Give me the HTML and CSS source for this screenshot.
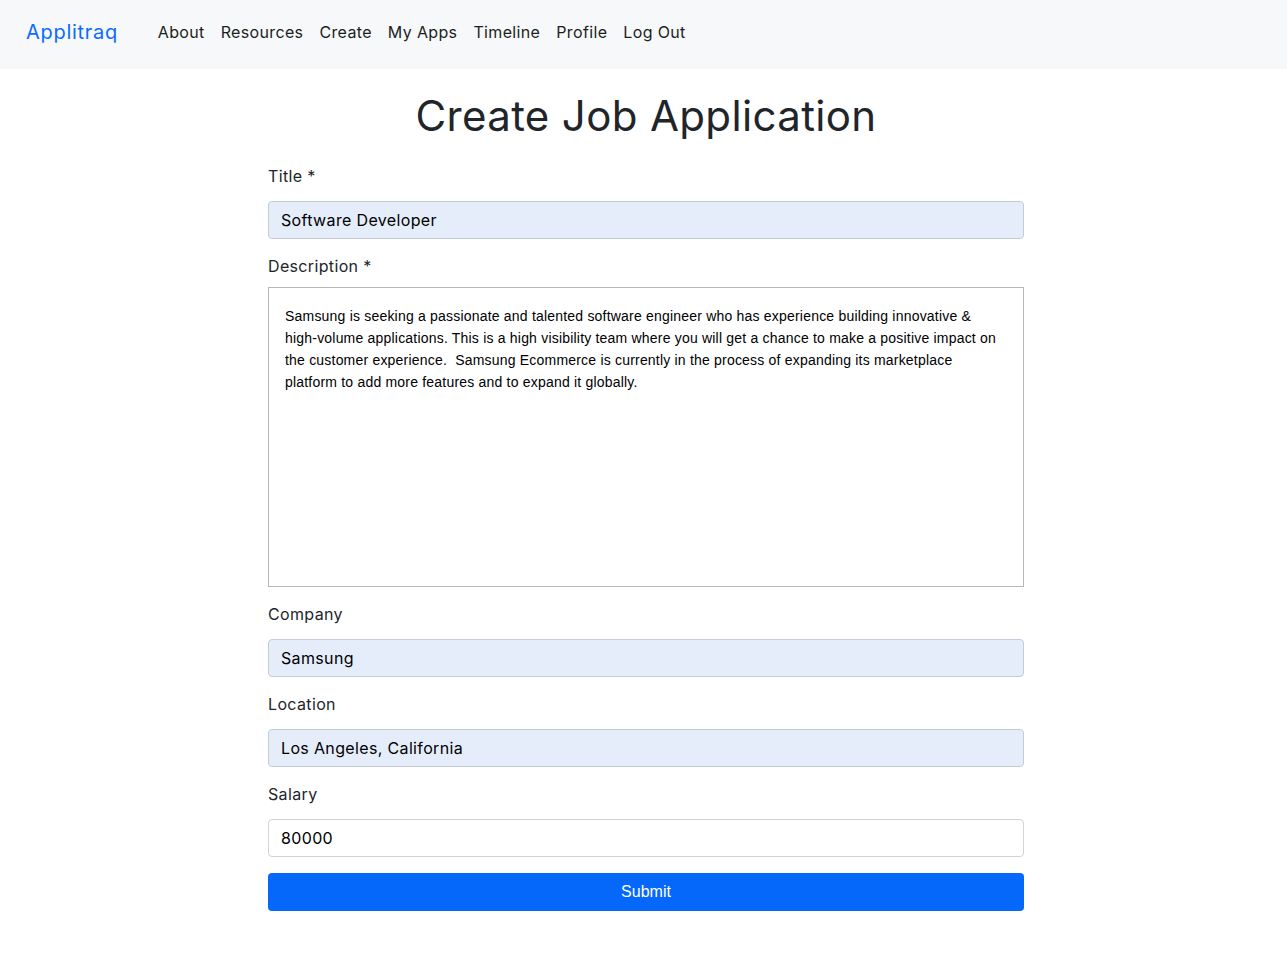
FILE: index.html
```html
<!DOCTYPE html>
<html lang="en">
<head>
<meta charset="utf-8">
<title>Applitraq - Create Job Application</title>
<link rel="stylesheet" href="styles.css">
</head>
<body>
<nav class="navbar">
  <a class="brand" href="#">Applitraq</a>
  <ul class="nav-links">
    <li><a href="#">About</a></li>
    <li><a href="#">Resources</a></li>
    <li><a href="#">Create</a></li>
    <li><a href="#">My Apps</a></li>
    <li><a href="#">Timeline</a></li>
    <li><a href="#">Profile</a></li>
    <li><a href="#">Log Out</a></li>
  </ul>
</nav>
<main class="page">
  <h1 class="page-title">Create Job Application</h1>
  <form class="form">
    <div class="field">
      <label class="label">Title *</label>
      <input class="input filled" type="text" value="Software Developer">
    </div>
    <div class="field">
      <label class="label label-tight">Description *</label>
      <textarea class="textarea">Samsung is seeking a passionate and talented software engineer who has experience building innovative &amp; high-volume applications. This is a high visibility team where you will get a chance to make a positive impact on the customer experience.  Samsung Ecommerce is currently in the process of expanding its marketplace platform to add more features and to expand it globally.</textarea>
    </div>
    <div class="field">
      <label class="label">Company</label>
      <input class="input filled" type="text" value="Samsung">
    </div>
    <div class="field">
      <label class="label">Location</label>
      <input class="input filled" type="text" value="Los Angeles, California">
    </div>
    <div class="field">
      <label class="label">Salary</label>
      <input class="input" type="text" value="80000">
    </div>
    <button class="submit" type="button">Submit</button>
  </form>
</main>
</body>
</html>
```

FILE: styles.css
```css
* { box-sizing: border-box; }
body {
  margin: 0;
  font-family: Inter, "Open Sans", sans-serif;
  color: #212529;
  background: #fff;
  letter-spacing: 0.35px;
}
.navbar {
  height: 69px;
  background: #f7f8fa;
  display: flex;
  align-items: center;
  padding: 0 26px 6px;
}
.brand {
  font-size: 20px;
  letter-spacing: 0.7px;
  color: #0a6cff;
  text-decoration: none;
  margin-right: 40px;
}
.nav-links {
  list-style: none;
  margin: 0;
  padding: 0;
  display: flex;
  gap: 16px;
}
.nav-links a {
  color: #1b1e21;
  text-decoration: none;
  font-size: 16px;
}
.page {
  width: 756px;
  margin: 0 0 0 calc(50% - 375.5px);
}
.page-title {
  margin: 0 0 20px;
  padding-top: 19px;
  font-weight: 400;
  font-size: 42px;
  line-height: 56px;
  text-align: center;
}
.form {
  display: flex;
  flex-direction: column;
}
.field {
  display: flex;
  flex-direction: column;
  margin-bottom: 15px;
}
.label {
  font-size: 16px;
  line-height: 24px;
  margin-bottom: 13px;
  color: #212529;
}
.label-tight {
  margin-bottom: 9px;
}
.input {
  margin: 0;
  height: 38px;
  border: 1px solid #ced4da;
  border-radius: 4px;
  padding: 0 12px;
  font-family: inherit;
  letter-spacing: 0.35px;
  font-size: 16px;
  color: #000;
  background: #fff;
}
.input.filled {
  background: #e5edfb;
  border-color: #c4ccd8;
}
.textarea {
  margin: 0;
  height: 300px;
  border: 1px solid #b7b7b7;
  border-radius: 0;
  padding: 17px 16px 16px;
  font-family: "Liberation Sans", Arial, sans-serif;
  font-size: 14px;
  letter-spacing: 0.2px;
  line-height: 22px;
  color: #000;
  resize: none;
  display: block;
}
.submit {
  margin: 1px 0 0;
  height: 38px;
  border: none;
  border-radius: 4px;
  background: #0568fb;
  color: #fff;
  font-family: "Liberation Sans", Arial, sans-serif;
  font-size: 16px;
}
```
